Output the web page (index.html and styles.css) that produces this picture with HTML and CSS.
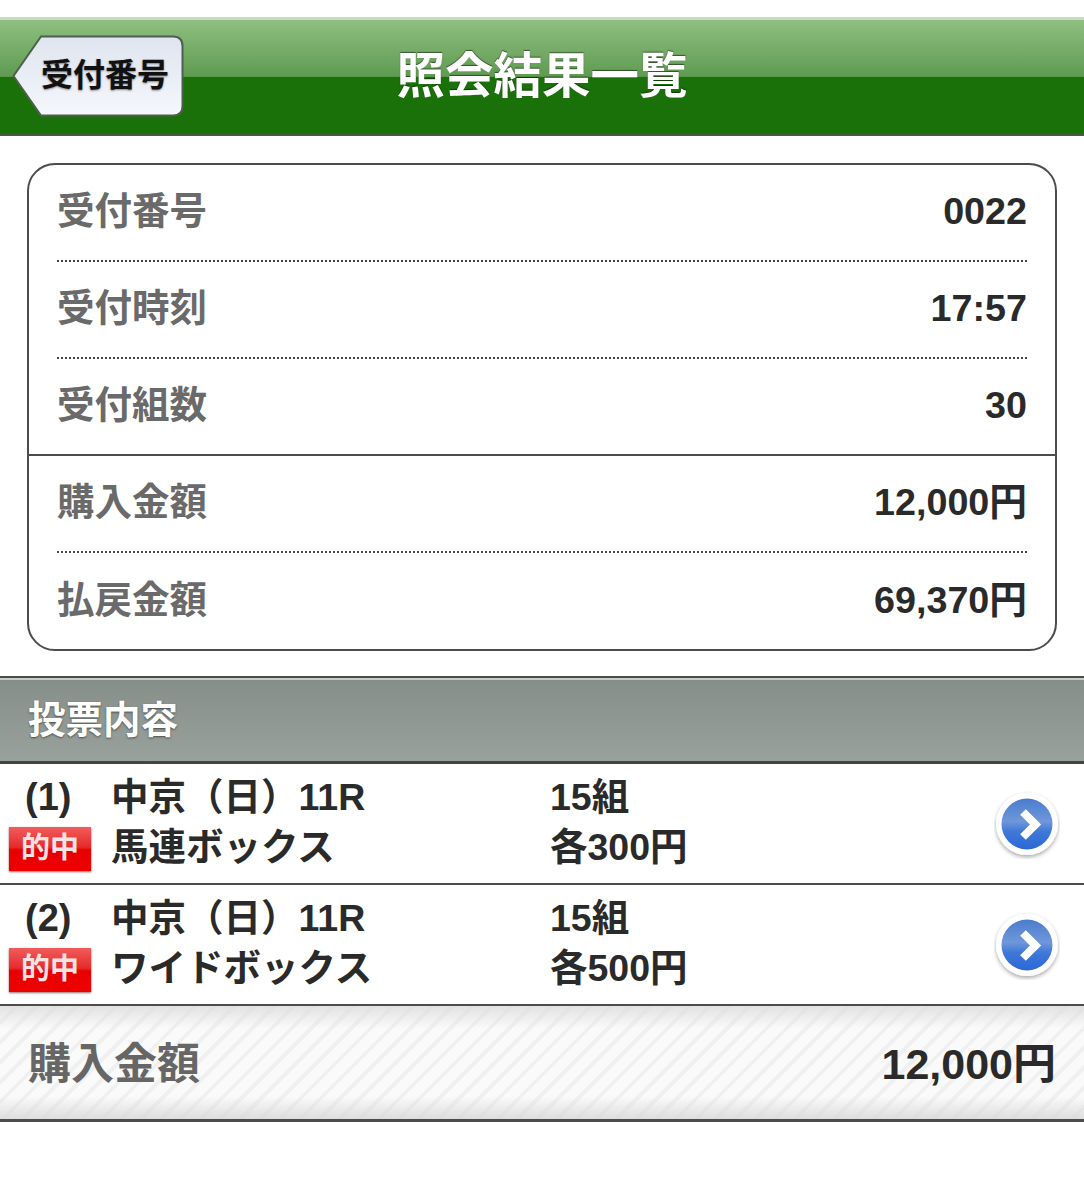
FILE: index.html
```html
<!DOCTYPE html>
<html lang="ja">
<head>
    <meta charset="UTF-8">
    <meta name="viewport" content="width=device-width, initial-scale=1.0">
    <title>照会結果一覧</title>
    <link rel="stylesheet" href="styles.css">
</head>
<body>
    <header class="topbar">
        <a class="back-btn">
            <svg class="back-shape" width="172" height="82" viewBox="0 0 172 82">
                <defs>
                    <linearGradient id="backFill" x1="0" y1="0" x2="0" y2="1">
                        <stop offset="0" stop-color="#dfe5ef"/>
                        <stop offset="0.5" stop-color="#e9edf5"/>
                        <stop offset="1" stop-color="#f6f8fc"/>
                    </linearGradient>
                </defs>
                <path d="M29 1.500H161Q170.500 1.500 170.500 11V71Q170.500 80.500 161 80.500H29L1.500 41Z" fill="url(#backFill)" stroke="#4f5f4f" stroke-width="2"/>
            </svg>
            <span class="back-label">受付番号</span>
        </a>
        <h1>照会結果一覧</h1>
    </header>

    <section class="summary">
        <div class="summary-row dotted"><span class="label">受付番号</span><span class="value">0022</span></div>
        <div class="summary-row dotted"><span class="label">受付時刻</span><span class="value">17:57</span></div>
        <div class="summary-row solid"><span class="label">受付組数</span><span class="value">30</span></div>
        <div class="summary-row dotted"><span class="label">購入金額</span><span class="value">12,000円</span></div>
        <div class="summary-row"><span class="label">払戻金額</span><span class="value">69,370円</span></div>
    </section>

    <h2 class="section-title">投票内容</h2>

    <div class="bet">
        <div class="bet-no">
            <span class="num">(1)</span>
            <span class="hit">的中</span>
        </div>
        <div class="bet-name">
            <span>中京（日）11R</span>
            <span>馬連ボックス</span>
        </div>
        <div class="bet-price">
            <span>15組</span>
            <span>各300円</span>
        </div>
        <svg class="arrow" width="66" height="68" viewBox="0 0 66 68">
            <use href="#arrowIcon"/>
        </svg>
    </div>
    <div class="bet">
        <div class="bet-no">
            <span class="num">(2)</span>
            <span class="hit">的中</span>
        </div>
        <div class="bet-name">
            <span>中京（日）11R</span>
            <span>ワイドボックス</span>
        </div>
        <div class="bet-price">
            <span>15組</span>
            <span>各500円</span>
        </div>
        <svg class="arrow" width="66" height="68" viewBox="0 0 66 68">
            <use href="#arrowIcon"/>
        </svg>
    </div>

    <div class="total">
        <span class="total-label">購入金額</span>
        <span class="total-value">12,000円</span>
    </div>

    <svg class="icon-defs" width="0" height="0">
        <defs>
            <linearGradient id="arrowBlue" x1="0" y1="0" x2="0" y2="1">
                <stop offset="0" stop-color="#4a7cce"/>
                <stop offset="0.45" stop-color="#6f97da"/>
                <stop offset="0.65" stop-color="#3f78d8"/>
                <stop offset="1" stop-color="#2a68d6"/>
            </linearGradient>
            <filter id="arrowShadow" x="-20%" y="-20%" width="140%" height="140%">
                <feDropShadow dx="0" dy="2" stdDeviation="2" flood-color="#000" flood-opacity="0.35"/>
            </filter>
            <g id="arrowIcon">
                <circle cx="33" cy="33" r="31" fill="#fff" filter="url(#arrowShadow)"/>
                <circle cx="33" cy="33" r="25.500" fill="url(#arrowBlue)"/>
                <path d="M29 21L41.500 33.500L29 46" fill="none" stroke="#fff" stroke-width="8"/>
            </g>
        </defs>
    </svg>
</body>
</html>
```

FILE: styles.css
```css
/* CSS styles */
body, h1, h2 {
    margin: 0;
    padding: 0;
}

body {
    font-family: "Liberation Sans", "Noto Sans CJK JP", sans-serif;
    font-weight: bold;
    background-color: #fff;
    color: #2a2a2a;
    padding-top: 17px;
    padding-bottom: 78px;
}

/* top bar */
.topbar {
    position: relative;
    height: 119px;
    box-sizing: border-box;
    border-top: 3px solid #c5deb9;
    border-bottom: 2px solid #4a5a4a;
    background: linear-gradient(#8fbf80 0%, #5f9b51 49.500%, #1a7009 50%, #1a7009 100%);
    display: flex;
    justify-content: center;
    align-items: center;
}

.topbar h1 {
    font-size: 48.500px;
    line-height: 60px;
    color: #fff;
    text-shadow: 0 -1px 1px rgba(0, 0, 0, 0.5);
    margin-top: -3px;
}

.back-btn {
    position: absolute;
    left: 12px;
    top: 15px;
    width: 172px;
    height: 82px;
}

.back-shape {
    position: absolute;
    left: 0;
    top: 0;
}

.back-label {
    position: absolute;
    left: 29px;
    top: 19px;
    font-size: 32px;
    line-height: 42px;
    color: #111;
    text-shadow: 0 1px 2px rgba(0, 0, 0, 0.45);
}

/* summary card */
.summary {
    box-sizing: border-box;
    width: 1030px;
    height: 488px;
    margin: 27px 0 0 27px;
    border: 2px solid #4c4c4c;
    border-radius: 28px;
}

.summary-row {
    height: 97px;
    box-sizing: border-box;
    padding-bottom: 4px;
    margin: 0 28px;
    display: flex;
    justify-content: space-between;
    align-items: center;
}

.summary-row.dotted {
    border-bottom: 2px dotted #444;
}

.summary-row.solid {
    margin: 0;
    padding: 0 28px 4px;
    border-bottom: 2px solid #4c4c4c;
}

.label {
    font-size: 37.500px;
    line-height: 50px;
    color: #6a6a6a;
}

.value {
    font-size: 37.700px;
    line-height: 50px;
}

/* section heading */
.section-title {
    height: 88px;
    box-sizing: border-box;
    margin-top: 25px;
    padding-left: 28px;
    border-top: 2px solid #4c4c4c;
    border-bottom: 3px solid #444;
    box-shadow: inset 0 2px 0 #c8cdc9;
    background: linear-gradient(#868e89, #98a19c);
    font-size: 37.500px;
    line-height: 84px;
    color: #fff;
    text-shadow: 0 1px 2px rgba(0, 0, 0, 0.5);
}

/* bet rows */
.bet {
    height: 121px;
    box-sizing: border-box;
    padding: 8px 24px 0 0;
    border-bottom: 2px solid #4c4c4c;
    display: flex;
    align-items: flex-start;
}

.bet-no {
    width: 111px;
    display: flex;
    flex-direction: column;
}

.num {
    font-size: 38px;
    line-height: 50px;
    padding-left: 25px;
}

.hit {
    width: 82px;
    height: 44px;
    margin: 5px 0 0 9px;
    background: linear-gradient(#f25c5c 0%, #e62a2a 46%, #e60000 52%, #f00000 100%);
    box-shadow: 0 1px 2px rgba(80, 0, 0, 0.6);
    color: #f7e3e3;
    font-size: 29px;
    line-height: 42px;
    text-align: center;
}

.bet-name {
    width: 439px;
    display: flex;
    flex-direction: column;
    font-size: 37.500px;
    line-height: 50px;
}

.bet-price {
    flex: 1;
    display: flex;
    flex-direction: column;
    font-size: 37.500px;
    line-height: 50px;
}

.arrow {
    margin-top: 19px;
}

.icon-defs {
    position: absolute;
}

/* total */
.total {
    height: 116px;
    box-sizing: border-box;
    padding: 2px 28px 0;
    border-bottom: 3px solid #4c4c4c;
    background-image:
        linear-gradient(rgba(220, 220, 220, 0.8), rgba(255, 255, 255, 0) 20%, rgba(255, 255, 255, 0) 80%, rgba(215, 215, 215, 0.8)),
        repeating-linear-gradient(135deg, #fafafa 0, #fafafa 10px, #f0f0f0 10px, #f0f0f0 14px);
    display: flex;
    justify-content: space-between;
    align-items: center;
}

.total-label {
    font-size: 43px;
    line-height: 50px;
    color: #666;
}

.total-value {
    font-size: 43px;
    line-height: 50px;
}
```
